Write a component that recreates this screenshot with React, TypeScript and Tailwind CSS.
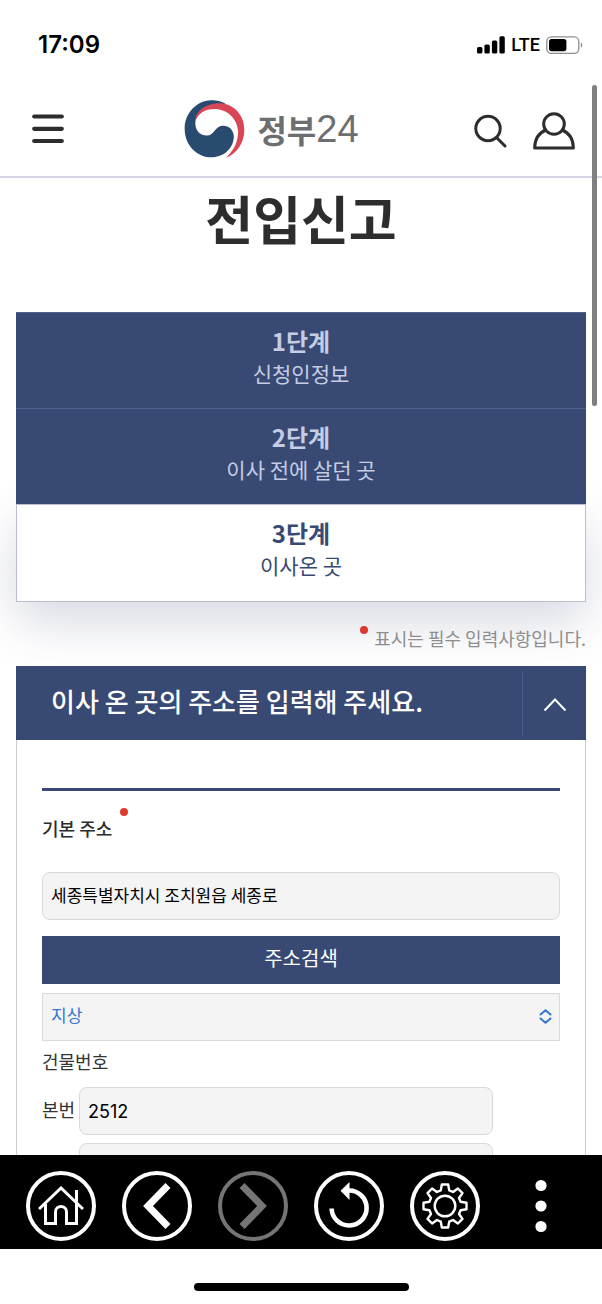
import { useState } from "react";

const ringButton =
  "flex size-[70px] items-center justify-center rounded-full border-4 border-white text-white";
const field =
  "h-12 rounded-lg border border-[#d9d9d9] bg-[#f4f4f4] px-2 text-black outline-none";

const steps = [
  { title: "1단계", label: "신청인정보" },
  { title: "2단계", label: "이사 전에 살던 곳" },
  { title: "3단계", label: "이사온 곳" },
];

function StatusBar() {
  return (
    <div className="flex h-[85px] shrink-0 items-center justify-between pt-1 pr-[18px] pl-[38px] text-black">
      <span className="font-['Inter','Noto_Sans_CJK_KR',sans-serif] text-[24px] font-semibold">17:09</span>
      <div className="flex items-center gap-[6px]">
        <svg width="28" height="18" viewBox="0 0 28 18" fill="currentColor" aria-hidden="true">
          <rect x="0" y="11" width="5.4" height="6.5" rx="1.6" />
          <rect x="7.4" y="8.5" width="5.4" height="9" rx="1.6" />
          <rect x="14.9" y="4.5" width="5.4" height="13" rx="1.6" />
          <rect x="22.4" y="0.3" width="5.4" height="17.2" rx="1.6" />
        </svg>
        <span className="font-['Roboto',sans-serif] text-[18px] leading-6 font-medium">LTE</span>
        <svg width="38" height="18" viewBox="0 0 38 18" aria-hidden="true">
          <rect x="0.8" y="0.8" width="32" height="16.6" rx="4.6" fill="none" stroke="#8e8e8e" strokeWidth="1.3" />
          <rect x="3" y="3" width="17.4" height="12.2" rx="2.6" fill="#000" />
          <path d="M34.8 6.5c2 .8 2 4.4 0 5.2z" fill="#8e8e8e" />
        </svg>
      </div>
    </div>
  );
}

function Header() {
  return (
    <header className="flex h-[93px] shrink-0 items-center justify-between border-b-2 border-[#d3d5e2] pr-[27px] pb-1 pl-8 text-[#2d2d2d]">
      <button type="button" aria-label="메뉴" className="flex w-[37px]">
        <svg width="32" height="30" viewBox="0 0 32 30" stroke="currentColor" strokeWidth="4.2" strokeLinecap="round">
          <path d="M2.2 2.5h27.6M2.2 14.8h27.6M2.2 27h27.6" />
        </svg>
      </button>
      <a href="#" className="flex items-center gap-3 text-[#6d6e70]">
        <svg width="61" height="60" viewBox="41 40 185 178" aria-hidden="true">
          <path d="M170 54C150 43 135 41 122 42C78 44 43 82 43 128C43 178 80 215 125 215C163 215 192 186 192 152C192 132 177 118 158 119C134 120 134 148 110 149C88 149 72 130 76 104C80 78 110 52 170 54Z" fill="#294b70" />
          <path d="M76 104C74 80 104 50 150 51C195 54 224 88 224 132C224 170 202 204 168 216C192 196 206 166 205 136C203 96 170 68 134 68C104 68 84 82 76 104Z" fill="#d94756" />
        </svg>
        <span className="flex items-center">
          <span className="font-['Noto_Sans_CJK_KR',sans-serif] text-[32px] leading-10 font-bold">정부</span>
          <span className="font-['Liberation_Sans',sans-serif] text-[38px] leading-10">24</span>
        </span>
      </a>
      <div className="flex items-center gap-[26px] pt-1">
        <button type="button" aria-label="검색">
          <svg width="33" height="34" viewBox="0 0 33 34" fill="none" stroke="currentColor" strokeWidth="3">
            <circle cx="14" cy="14.5" r="12.2" />
            <path d="M22.5 23.5L31 32" strokeLinecap="round" />
          </svg>
        </button>
        <button type="button" aria-label="로그인">
          <svg width="42" height="38" viewBox="0 0 42 38" fill="none" stroke="currentColor" strokeWidth="3">
            <circle cx="21" cy="12" r="10.3" />
            <path d="M13 18C5.500 21 1.800 27 1.600 36H40.400C40.200 27 36.500 21 29 18" strokeLinejoin="round" />
          </svg>
        </button>
      </div>
    </header>
  );
}

function Steps() {
  return (
    <ol className="text-center">
      {steps.map((step, i) => {
        const current = i === 2;
        return (
          <li
            key={step.title}
            aria-current={current ? "step" : undefined}
            className={
              current
                ? "h-[98px] border border-[#b9bdd0] bg-white pt-[10px] text-[#384a74] shadow-[0_20px_50px_rgba(56,66,110,0.2)]"
                : "relative z-10 h-24 border-t border-[#4d5f8c] bg-[#384a74] pt-[10px] text-[#c5cce3]"
            }
          >
            <strong className="block text-[24px] leading-9 font-bold">{step.title}</strong>
            <span className="block text-[21px] leading-7">{step.label}</span>
          </li>
        );
      })}
    </ol>
  );
}

function AddressPanel() {
  const [open, setOpen] = useState(true);
  return (
    <section>
      <div className="flex h-[74px] items-center bg-[#384a74] text-white">
        <h2 className="flex-1 pb-1 pl-[35px] text-[26px] leading-10 font-medium">이사 온 곳의 주소를 입력해 주세요.</h2>
        <button
          type="button"
          aria-label="접기"
          aria-expanded={open}
          onClick={() => setOpen(!open)}
          className="flex h-16 w-16 items-center justify-center border-l border-[#4d5f8c] pt-1"
        >
          <svg width="24" height="14" viewBox="0 0 24 14" fill="none" stroke="currentColor" strokeWidth="2">
            <path d="M1.500 12.500L12 1.500L22.500 12.500" />
          </svg>
        </button>
      </div>
      {open && (
        <form className="border-x border-[#cccccc] px-[25px] pt-12 pb-12 text-[18px] text-[#333]" onSubmit={(e) => e.preventDefault()}>
          <div className="border-t-[3px] border-[#384a74] pt-[19px]">
            <label htmlFor="address" className="relative inline-block leading-9 font-medium text-[#2d2d2d]">
              기본 주소
              <span className="absolute -top-[2px] -right-4 size-2 rounded-full bg-[#dc3a2f]" />
            </label>
          </div>
          <input id="address" readOnly defaultValue="세종특별자치시 조치원읍 세종로" className={`${field} mt-[26px] block w-full pb-1 text-[17px]`} />
          <button type="submit" className="mt-4 h-12 w-full bg-[#384a74] pb-1 text-[20px] text-white">
            주소검색
          </button>
          <div className="relative mt-[9px]">
            <select
              aria-label="지상 지하 구분"
              className="block h-12 w-full appearance-none border border-[#d9d9d9] bg-[#f4f4f4] px-2 pb-1 text-[17px] text-[#3478d1] outline-none"
            >
              <option>지상</option>
              <option>지하</option>
            </select>
            <svg className="pointer-events-none absolute top-4 right-2" width="13" height="15" viewBox="0 0 13 15" fill="none" stroke="#3478d1" strokeWidth="2" strokeLinecap="round" strokeLinejoin="round">
              <path d="M1.500 5.500L6.500 1.200L11.500 5.500M1.500 9.500L6.500 13.800L11.500 9.500" />
            </svg>
          </div>
          <fieldset>
            <legend className="pt-[2px] leading-9">건물번호</legend>
            <div className="mt-2 grid grid-cols-[33px_1fr] gap-x-1 gap-y-2 pr-[67px]">
              <label htmlFor="main-number" className="leading-[44px] whitespace-nowrap">본번</label>
              <input id="main-number" readOnly defaultValue="2512" className={`${field} w-full min-w-0 font-['Inter',sans-serif] text-[18px]`} />
              <input aria-label="부번" className={`${field} col-start-2 w-full min-w-0 text-[18px]`} />
            </div>
          </fieldset>
        </form>
      )}
    </section>
  );
}

function Toolbar() {
  return (
    <nav className="grid h-[94px] shrink-0 grid-cols-6 place-items-center bg-black px-[13px] pt-[7px]">
      <button type="button" aria-label="홈" className={ringButton}>
        <svg className="shrink-0" width="46" height="40" viewBox="0 0 46 40" fill="none" stroke="currentColor" strokeWidth="3">
          <path d="M1 23L23 2L45 23" />
          <path d="M7.500 18V37.500H17.500V26C17.500 18.500 28.500 18.500 28.500 26V37.500H38.500V4" />
        </svg>
      </button>
      <button type="button" aria-label="뒤로" className={ringButton}>
        <svg className="shrink-0" width="28" height="46" viewBox="0 0 28 46" fill="none" stroke="currentColor" strokeWidth="7">
          <path d="M25 2.500L5 23L25 43.500" />
        </svg>
      </button>
      <button type="button" aria-label="앞으로" className="flex size-[70px] items-center justify-center rounded-full border-4 border-[#757575] text-[#757575]">
        <svg className="shrink-0" width="28" height="46" viewBox="0 0 28 46" fill="none" stroke="currentColor" strokeWidth="7">
          <path d="M3 2.500L23 23L3 43.500" />
        </svg>
      </button>
      <button type="button" aria-label="새로고침" className={ringButton}>
        <svg className="shrink-0" width="62" height="62" viewBox="0 0 62 62" fill="none" stroke="currentColor" strokeWidth="4.600">
          <path d="M13.600 33.500A17.500 17.500 0 1 0 31 15.500" />
          <path d="M31.500 7V25L22.500 15.800Z" fill="currentColor" stroke="none" />
        </svg>
      </button>
      <button type="button" aria-label="설정" className={ringButton}>
        <svg className="shrink-0" width="46" height="46" viewBox="-23 -23 46 46" fill="none" stroke="currentColor" strokeWidth="2.400" strokeLinejoin="round">
          <circle r="10.300" />
          <path d="M-3.200 -21.500H3.200L4.200 -15.600L8 -14L12.900 -17.500L17.500 -12.900L14 -8L15.600 -4.200L21.500 -3.200V3.200L15.600 4.200L14 8L17.500 12.900L12.900 17.500L8 14L4.200 15.600L3.200 21.500H-3.200L-4.200 15.600L-8 14L-12.900 17.500L-17.500 12.900L-14 8L-15.600 4.200L-21.500 3.200V-3.200L-15.600 -4.200L-14 -8L-17.500 -12.900L-12.900 -17.500L-8 -14L-4.200 -15.600Z" />
        </svg>
      </button>
      <button type="button" aria-label="더보기" className="text-white">
        <svg width="12" height="54" viewBox="0 0 12 54" fill="currentColor">
          <circle cx="6" cy="6.500" r="5.600" />
          <circle cx="6" cy="27" r="5.600" />
          <circle cx="6" cy="47.500" r="5.600" />
        </svg>
      </button>
    </nav>
  );
}

export default function App() {
  return (
    <div className="relative flex h-screen flex-col bg-white font-['Noto_Sans_CJK_KR',sans-serif]">
      <StatusBar />
      <Header />
      <main className="flex-1 overflow-y-auto px-4 [scrollbar-width:none]">
        <h1 className="pt-1 text-center text-[52px] leading-[72px] font-bold text-[#2d2d2d]">전입신고</h1>
        <div className="mt-[58px]">
          <Steps />
        </div>
        <p className="relative mt-5 mb-3 flex items-start justify-end gap-[6px] text-[18px] leading-8 text-[#8e8e8e]">
          <span className="mt-1 size-2 rounded-full bg-[#dc3a2f]" />
          표시는 필수 입력사항입니다.
        </p>
        <AddressPanel />
      </main>
      <Toolbar />
      <div className="flex h-[55px] shrink-0 justify-center pt-[34px]">
        <div className="h-2 w-[215px] rounded-full bg-black" />
      </div>
      <div className="absolute top-[85px] right-[5px] z-20 h-[321px] w-[5px] rounded-full bg-[#7f7f7f]" />
    </div>
  );
}
